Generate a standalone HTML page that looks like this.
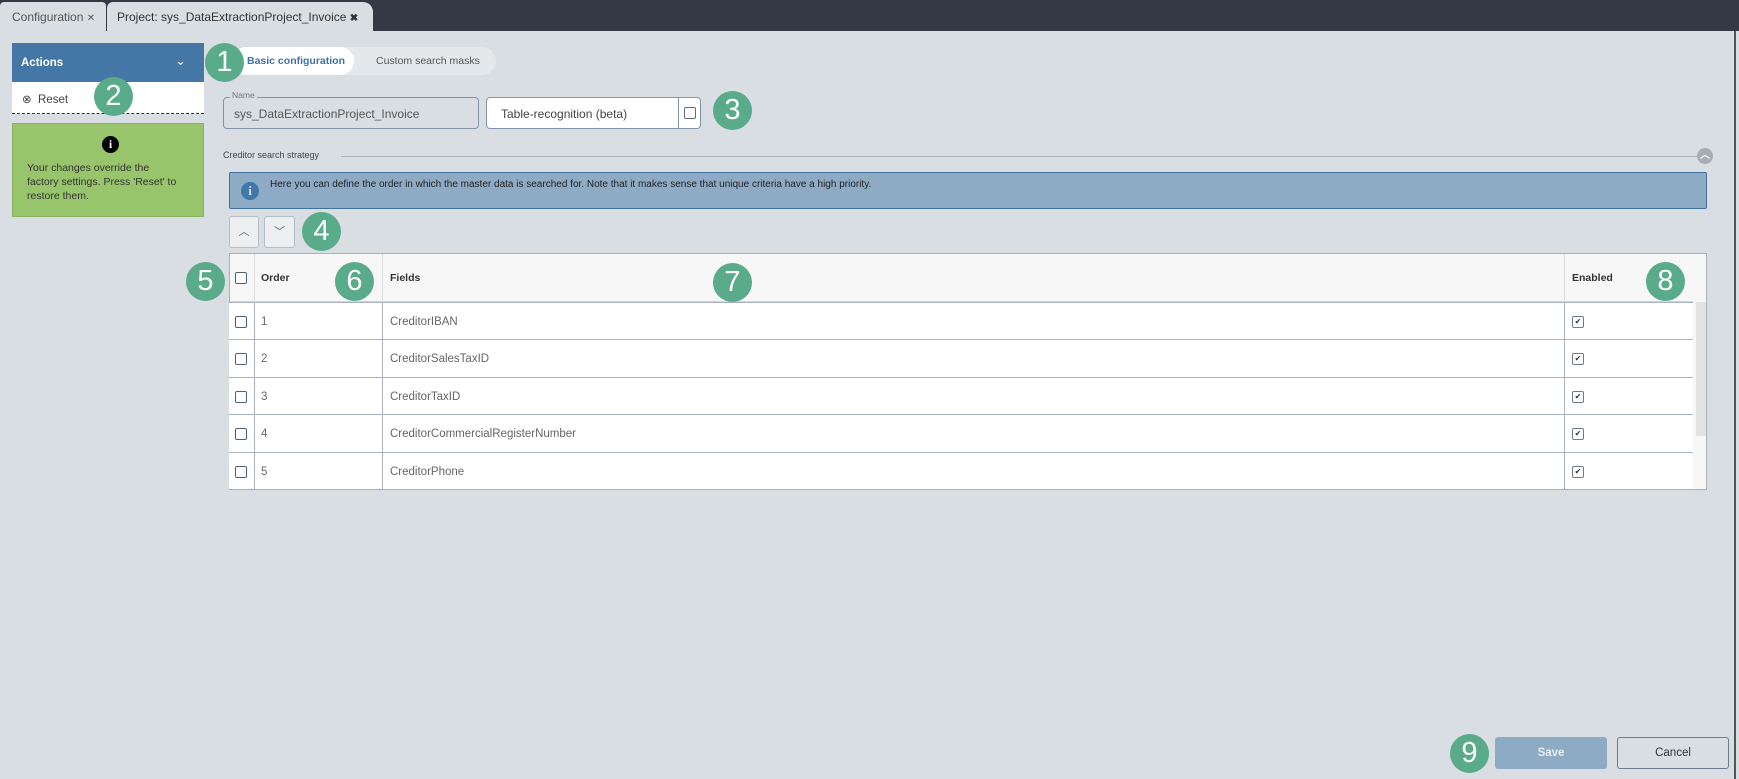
<!DOCTYPE html>
<html><head><meta charset="utf-8"><style>
*{box-sizing:border-box;margin:0;padding:0}
body{width:1739px;height:779px;overflow:hidden;background:#d9dee2;font-family:"Liberation Sans",sans-serif;position:relative;color:#333}
.a{position:absolute;white-space:nowrap}
.c{position:absolute;border-radius:50%;background:#5aab89;color:#fff;font-size:29px;display:flex;align-items:center;justify-content:center;width:39px;height:39px}
.cb{position:absolute;width:12px;height:12px;border:1.3px solid #4f6072;border-radius:2px;background:#fff}
.ck{font-size:8px;line-height:9px;text-align:center;color:#333;border-color:#6b7c8e}
.row{position:absolute;left:229px;width:1464px;height:38px;border-top:1px solid #a9b4bf;background:#fff;font-size:11.5px;color:#666}
.row span{top:13px !important}
</style></head><body>
<div class="a" style="left:0;top:0;width:1739px;height:31px;background:#333a45"></div>
<div class="a" style="left:0;top:2px;width:106px;height:29px;background:#d9dee2;border-radius:4px 4px 0 0;font-size:12px;color:#555;padding:8px 0 0 12px">Configuration <span style="font-size:10px">✕</span></div>
<div class="a" style="left:107px;top:2px;width:266px;height:29px;background:#d9dee2;border-radius:6px 10px 0 0;font-size:12px;color:#333;padding:8px 0 0 10px">Project: sys_DataExtractionProject_Invoice <b style="font-size:10px">✖</b></div>
<div class="a" style="left:1734px;top:31px;width:2px;height:748px;background:#555"></div>

<div class="a" style="left:12px;top:43px;width:192px;height:39px;background:#4477a6;color:#fff;font-weight:bold;font-size:11.5px;padding:14px 0 0 9px">Actions<span style="position:absolute;right:18px;top:10px;font-weight:normal;font-size:13px">⌄</span></div>
<div class="a" style="left:12px;top:82px;width:192px;height:32px;background:#fff;border-bottom:1px dashed #333;font-size:11.5px;color:#444;padding:10px 0 0 10px">⊗&nbsp; Reset</div>
<div class="a" style="left:12px;top:123px;width:192px;height:94px;background:#98c46c;border:1px solid #8bb060;font-size:10.5px;color:#333;padding:37px 0 0 14px;line-height:14px">
<div style="position:absolute;left:89px;top:12px;width:17px;height:17px;border-radius:50%;background:#000;color:#fff;font-weight:bold;font-size:12px;text-align:center;line-height:17px;font-family:'Liberation Serif',serif">i</div>
Your changes override the<br>factory settings. Press 'Reset' to<br>restore them.</div>

<div class="a" style="left:232px;top:47px;width:264px;height:28px;background:#e5e8eb;border-radius:14px"></div>
<div class="a" style="left:232px;top:47px;width:122px;height:28px;background:#fff;border-radius:14px;font-size:10.5px;font-weight:bold;color:#3d72a6;padding:8px 0 0 15px">Basic configuration</div>
<div class="a" style="left:376px;top:55px;font-size:10.5px;color:#555">Custom search masks</div>

<div class="a" style="left:223px;top:97px;width:256px;height:32px;border:1px solid #8294a8;border-radius:4px;font-size:12px;color:#555;padding:9px 0 0 10px">sys_DataExtractionProject_Invoice</div>
<div class="a" style="left:230px;top:90px;background:#d9dee2;font-size:8.5px;color:#777;padding:0 2px">Name</div>
<div class="a" style="left:486px;top:97px;width:215px;height:32px;border:1px solid #8294a8;border-radius:4px;background:#fff;font-size:12px;color:#444;padding:9px 0 0 14px">Table-recognition (beta)<div style="position:absolute;left:191px;top:0;width:1px;height:30px;background:#8294a8"></div></div>
<div class="cb" style="left:684px;top:107px;border-color:#5c6d80"></div>

<div class="a" style="left:223px;top:150px;font-size:9px;color:#444">Creditor search strategy</div>
<div class="a" style="left:341px;top:156px;width:1356px;height:1px;background:#a7afb8"></div>
<div class="a" style="left:1697px;top:148px;width:16px;height:16px;border-radius:50%;background:#a6adb5;color:#fff;font-size:10px;text-align:center;line-height:16px;font-weight:bold">︿</div>

<div class="a" style="left:229px;top:172px;width:1478px;height:37px;background:#8eabc5;border:1px solid #3f72a4;border-radius:2px;font-size:10px;color:#222;padding:6px 0 0 40px">Here you can define the order in which the master data is searched for. Note that it makes sense that unique criteria have a high priority.
<div style="position:absolute;left:11px;top:9px;width:18px;height:18px;border-radius:50%;background:#4277a9;color:#d6e0ea;font-weight:bold;text-align:center;line-height:18px;font-size:13px;font-family:'Liberation Serif',serif">i</div></div>

<div class="a" style="left:229px;top:216px;width:30px;height:32px;border:1px solid #b5bcc4;border-radius:3px;background:#eceef0;color:#666;font-size:11px;text-align:center;line-height:30px">︿</div>
<div class="a" style="left:264px;top:216px;width:31px;height:32px;border:1px solid #b5bcc4;border-radius:3px;background:#eceef0;color:#666;font-size:11px;text-align:center;line-height:30px">﹀</div>

<div class="a" style="left:229px;top:253px;width:1478px;height:237px;border:1px solid #a9b0b8;background:#f7f7f7"></div>
<div class="a" style="left:230px;top:254px;width:1463px;height:48px;background:#f7f7f7;border-bottom:1px solid #d0d4d8;font-size:10.5px;font-weight:bold;color:#333">
<div class="cb" style="left:5px;top:18px"></div>
<div class="a" style="left:24px;top:0;width:1px;height:48px;background:#ddd"></div>
<div class="a" style="left:31px;top:18px">Order</div>
<div class="a" style="left:152px;top:0;width:1px;height:48px;background:#ddd"></div>
<div class="a" style="left:160px;top:18px">Fields</div>
<div class="a" style="left:1334px;top:0;width:1px;height:48px;background:#ddd"></div>
<div class="a" style="left:1342px;top:18px">Enabled</div>
</div>
<div class="a" style="left:1696px;top:302px;width:10px;height:134px;background:#e3e3e3"></div>

<div class="row" style="top:302px"><div class="cb" style="left:6px;top:13px"></div><span class="a" style="left:32px">1</span><span class="a" style="left:161px">CreditorIBAN</span><div class="cb ck" style="left:1343px;top:13px">✔</div></div>
<div class="row" style="top:339px"><div class="cb" style="left:6px;top:13px"></div><span class="a" style="left:32px">2</span><span class="a" style="left:161px">CreditorSalesTaxID</span><div class="cb ck" style="left:1343px;top:13px">✔</div></div>
<div class="row" style="top:377px"><div class="cb" style="left:6px;top:13px"></div><span class="a" style="left:32px">3</span><span class="a" style="left:161px">CreditorTaxID</span><div class="cb ck" style="left:1343px;top:13px">✔</div></div>
<div class="row" style="top:414px"><div class="cb" style="left:6px;top:13px"></div><span class="a" style="left:32px">4</span><span class="a" style="left:161px">CreditorCommercialRegisterNumber</span><div class="cb ck" style="left:1343px;top:13px">✔</div></div>
<div class="row" style="top:452px;height:37px"><div class="cb" style="left:6px;top:13px"></div><span class="a" style="left:32px">5</span><span class="a" style="left:161px">CreditorPhone</span><div class="cb ck" style="left:1343px;top:13px">✔</div></div>
<div class="a" style="left:254px;top:302px;width:1px;height:187px;background:#a9b4bf"></div>
<div class="a" style="left:382px;top:302px;width:1px;height:187px;background:#a9b4bf"></div>
<div class="a" style="left:1564px;top:302px;width:1px;height:187px;background:#a9b4bf"></div>

<div class="a" style="left:1495px;top:737px;width:112px;height:32px;background:#8eabc5;border-radius:3px;color:#e8eef4;font-weight:bold;font-size:11.5px;text-align:center;line-height:32px">Save</div>
<div class="a" style="left:1617px;top:737px;width:112px;height:32px;border:1px solid #6b7c8e;border-radius:3px;color:#333;font-size:11.5px;text-align:center;line-height:30px">Cancel</div>

<div class="c" style="left:205px;top:43px">1</div>
<div class="c" style="left:94px;top:77px">2</div>
<div class="c" style="left:713px;top:91px">3</div>
<div class="c" style="left:302px;top:212px">4</div>
<div class="c" style="left:186px;top:262px">5</div>
<div class="c" style="left:335px;top:262px">6</div>
<div class="c" style="left:713px;top:263px">7</div>
<div class="c" style="left:1646px;top:262px">8</div>
<div class="c" style="left:1450px;top:734px">9</div>
</body></html>
